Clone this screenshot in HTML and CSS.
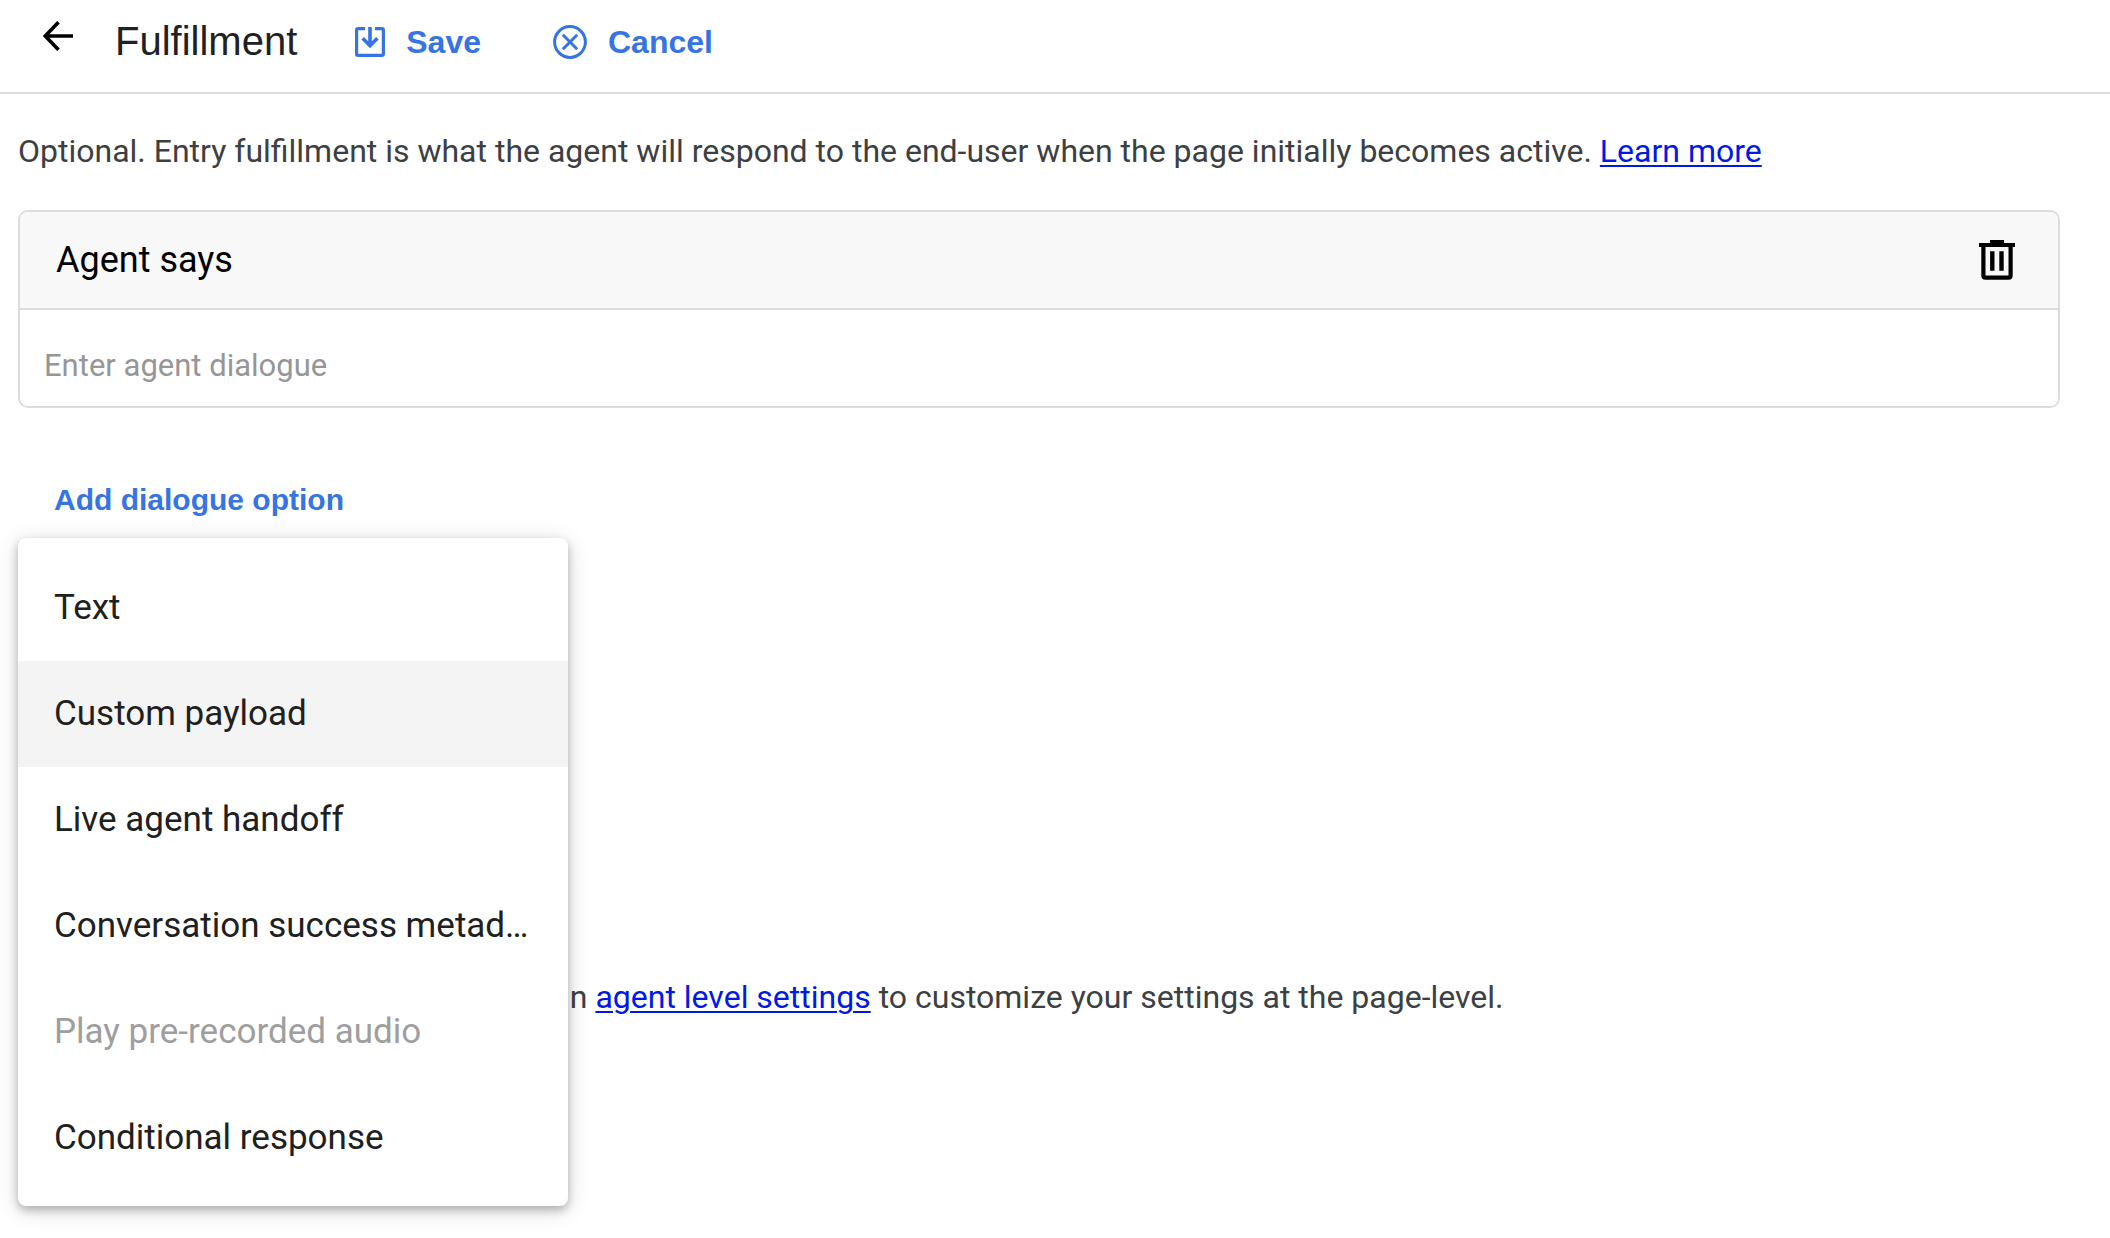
FILE: index.html
```html
<!DOCTYPE html>
<html lang="en">
<head>
  <meta charset="utf-8">
  <title>Fulfillment</title>
  <link rel="stylesheet" href="styles.css">
</head>
<body>
  <header class="toolbar">
    <button class="back" type="button" aria-label="Back">
      <svg width="30" height="30" viewBox="0 0 30 30" fill="none" stroke="currentColor" stroke-width="3.6"><path d="M15.5 1.2 2.2 15l13.3 13.8M2.5 15H30"/></svg>
    </button>
    <h1 class="title">Fulfillment</h1>
    <button class="action action-save" type="button">
      <svg width="30" height="30" viewBox="0 0 30 30" fill="none" stroke="currentColor" stroke-width="3.2"><path d="M10 1.6H3.2q-1.6 0-1.6 1.6v23.600q0 1.600 1.600 1.600h23.600q1.600 0 1.600-1.600V3.200q0-1.600-1.600-1.600H20"/><path d="M15 0v18M7.600 11.200 15 18.600l7.400-7.400" stroke-width="3.600"/></svg>
      Save
    </button>
    <button class="action action-cancel" type="button">
      <svg width="34" height="34" viewBox="0 0 34 34" fill="none" stroke="currentColor" stroke-width="3"><circle cx="17" cy="17" r="15.400"/><path d="m9.800 9.800 14.400 14.400M24.200 9.800 9.800 24.200"/></svg>
      Cancel
    </button>
  </header>

  <main class="content">
    <p class="note">Optional. Entry fulfillment is what the agent will respond to the end-user when the page initially becomes active. <a href="#learn-more">Learn more</a></p>

    <section class="card">
      <div class="card-head">
        <label for="dialogue">Agent says</label>
        <button class="delete" type="button" aria-label="Delete">
          <svg width="36" height="40" viewBox="0 0 36 40" fill="none" stroke="currentColor"><path fill="currentColor" stroke="none" d="M11 0h14v3h11v4H0V3h11z"/><path stroke-width="4.200" d="M4.400 6v29.500q0 2.200 2.200 2.200h22.800q2.200 0 2.200-2.200V6"/><path stroke-width="4.400" d="M13.300 11.300v19.500M22.500 11.300v19.500"/></svg>
        </button>
      </div>
      <input class="dialogue" id="dialogue" type="text" placeholder="Enter agent dialogue">
    </section>

    <div class="option">
      <button class="option-button" type="button" aria-haspopup="menu" aria-expanded="true">Add dialogue option</button>
      <div class="menu" role="menu">
        <button class="item" type="button" role="menuitem">Text</button>
        <button class="item item-active" type="button" role="menuitem">Custom payload</button>
        <button class="item" type="button" role="menuitem">Live agent handoff</button>
        <button class="item" type="button" role="menuitem">Conversation success metadata</button>
        <button class="item" type="button" role="menuitem" disabled>Play pre-recorded audio</button>
        <button class="item" type="button" role="menuitem">Conditional response</button>
      </div>
    </div>

    <p class="note settings">in <a href="#agent-settings">agent level settings</a> to customize your settings at the page-level.</p>
  </main>
</body>
</html>
```
FILE: styles.css
```css
* {
  box-sizing: border-box;
}

body {
  min-height: 100vh;
  margin: 0;
  background: #fff;
  color: #3c4043;
  font-family: Roboto, "Liberation Sans", sans-serif;
  font-size: 31px;
  line-height: 40px;
}

button {
  margin: 0;
  padding: 0;
  border: 0;
  background: none;
  color: inherit;
  font: inherit;
  cursor: pointer;
}

svg {
  display: block;
}

.toolbar {
  display: flex;
  align-items: center;
  padding: 0 43px 10px;
  border-bottom: 2px solid #dadce0;
  font-family: "Liberation Sans", Arial, sans-serif;
}

.back {
  padding-bottom: 10px;
  color: #000;
}

.title {
  margin: 0 0 0 42px;
  color: #202124;
  font-size: 40px;
  font-weight: 400;
  line-height: 82px;
}

.action {
  display: flex;
  align-items: center;
  gap: 21px;
  padding-top: 2px;
  color: #3574e2;
  font-size: 32px;
  font-weight: 700;
}

.action-save {
  margin-left: 58px;
}

.action-cancel {
  margin-left: 72px;
}

.content {
  padding: 37px 50px 0 18px;
}

.note {
  margin: 0;
  font-size: 32px;
}

.note a {
  color: #0019e6;
  text-decoration-thickness: 2px;
  text-underline-offset: 3px;
}

.card {
  margin-top: 39px;
  overflow: hidden;
  border: 2px solid #dadce0;
  border-radius: 10px;
}

.card-head {
  display: flex;
  align-items: center;
  justify-content: space-between;
  padding: 28px 43px 28px 36px;
  border-bottom: 2px solid #dadce0;
  background: #f8f8f8;
  color: #000;
  font-size: 36px;
}

.dialogue {
  display: block;
  width: 100%;
  padding: 36px 24px 20px;
  border: 0;
  outline: 0;
  background: #fff;
  color: #202124;
  font: inherit;
}

.dialogue::placeholder {
  color: #969696;
  opacity: 1;
}

.option {
  position: relative;
  margin-top: 54px;
}

.option-button {
  display: block;
  padding: 18px 36px;
  color: #3574e2;
  font-family: "Liberation Sans", Arial, sans-serif;
  font-size: 30px;
  font-weight: 700;
}

.menu {
  position: absolute;
  top: 100%;
  left: 0;
  width: 550px;
  padding: 17px 0 15px;
  border-radius: 8px;
  background: #fff;
  box-shadow: 0 4px 8px rgba(0, 0, 0, 0.24), 0 4px 22px rgba(0, 0, 0, 0.16);
}

.item {
  display: block;
  width: 100%;
  padding: 33px 36px;
  overflow: hidden;
  color: #202020;
  font-size: 35px;
  text-align: left;
  text-overflow: ellipsis;
  white-space: nowrap;
}

.item-active {
  background: #f4f4f4;
}

.item:disabled {
  color: #9e9e9e;
  cursor: default;
}

.settings {
  margin-top: 439px;
  padding-left: 544px;
}
```
